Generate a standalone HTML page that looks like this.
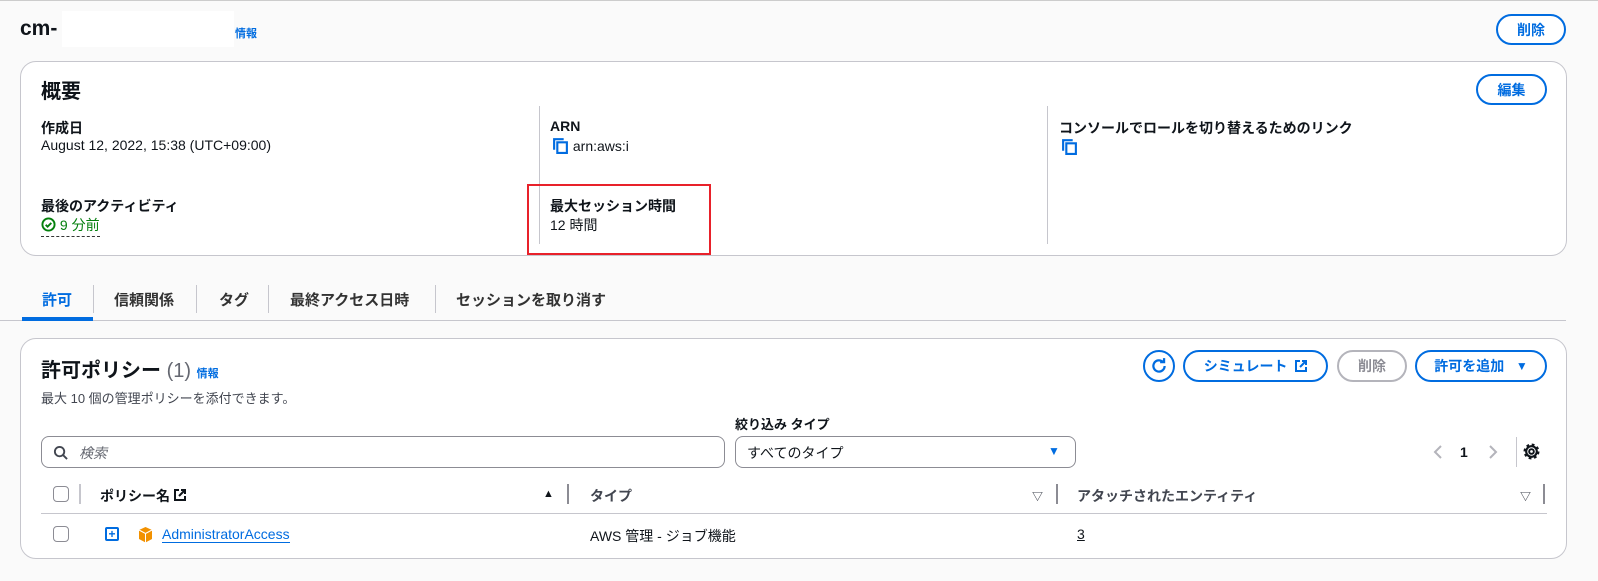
<!DOCTYPE html>
<html><head><meta charset="utf-8"><style>
*{box-sizing:border-box;margin:0;padding:0}
body{width:1598px;height:581px;background:#fafafa;font-family:"Liberation Sans","Noto Sans CJK JP",sans-serif;color:#0f141a;position:relative;overflow:hidden;font-size:14px;border-top:1px solid #ccc}
.a{position:absolute;white-space:nowrap}
.card{position:absolute;background:#fff;border:1px solid #c6c6cd;border-radius:16px}
.btn{position:absolute;border:2px solid #006ce0;border-radius:20px;color:#006ce0;font-weight:bold;font-size:14px;display:flex;align-items:center;justify-content:center;background:#fff}
.lbl{font-weight:bold;font-size:14px}
.blue{color:#006ce0}
.vd{position:absolute;width:1px;background:#c6c6cd}
.cb{position:absolute;width:16px;height:16px;border:1.5px solid #8c8c94;border-radius:4px;background:#fff}
</style></head><body>
<div class="a" style="left:20px;top:16px;font-size:21px;font-weight:bold">cm-</div>
<div class="a" style="left:62px;top:10px;width:172px;height:36px;background:#fff"></div>
<div class="a blue" style="left:235px;top:24px;font-size:11px;font-weight:bold">情報</div>
<div class="btn" style="left:1496px;top:13px;width:70px;height:31px">削除</div>

<div class="card" style="left:20px;top:60px;width:1547px;height:195px"></div>
<div class="a" style="left:41px;top:74px;font-size:20px;font-weight:bold">概要</div>
<div class="btn" style="left:1476px;top:73px;width:71px;height:31px">編集</div>
<div class="vd" style="left:539px;top:105px;height:138px"></div>
<div class="vd" style="left:1047px;top:105px;height:138px"></div>
<div class="a lbl" style="left:41px;top:117px">作成日</div>
<div class="a" style="left:41px;top:136px">August 12, 2022, 15:38 (UTC+09:00)</div>
<div class="a lbl" style="left:41px;top:195px">最後のアクティビティ</div>
<div class="a" style="left:41px;top:214px;color:#037f0c;border-bottom:1px dashed #333;padding-bottom:1px"><svg width="15" height="15" viewBox="0 0 16 16" style="vertical-align:-2px"><circle cx="8" cy="8" r="6.5" fill="none" stroke="#037f0c" stroke-width="2"/><path d="M5 8.3l2 2 4-4" fill="none" stroke="#037f0c" stroke-width="2"/></svg> 9 分前</div>
<div class="a lbl" style="left:550px;top:117px">ARN</div>
<div class="a" style="left:552px;top:136px"><svg width="17" height="17" viewBox="0 0 16 16" style="vertical-align:-3px"><path d="M2 12V2h9" fill="none" stroke="#006ce0" stroke-width="2"/><rect x="5" y="5" width="9" height="10" fill="none" stroke="#006ce0" stroke-width="2"/></svg> arn:aws:i</div>
<div class="a lbl" style="left:550px;top:195px">最大セッション時間</div>
<div class="a" style="left:550px;top:214px">12 時間</div>
<div class="a lbl" style="left:1059px;top:117px">コンソールでロールを切り替えるためのリンク</div>
<div class="a" style="left:1061px;top:137px"><svg width="17" height="17" viewBox="0 0 16 16"><path d="M2 12V2h9" fill="none" stroke="#006ce0" stroke-width="2"/><rect x="5" y="5" width="9" height="10" fill="none" stroke="#006ce0" stroke-width="2"/></svg></div>
<div class="a" style="left:527px;top:183px;width:184px;height:71px;border:2px solid #e8212a"></div>

<div class="a" style="left:0;top:319px;width:1566px;height:1px;background:#c6c6cd"></div>
<div class="a" style="left:22px;top:316px;width:71px;height:4px;background:#006ce0"></div>
<div class="a" style="left:42px;top:288px;font-size:15px;font-weight:bold;color:#006ce0">許可</div>
<div class="a" style="left:114px;top:288px;font-size:15px;font-weight:bold;color:#333">信頼関係</div>
<div class="a" style="left:219px;top:288px;font-size:15px;font-weight:bold;color:#333">タグ</div>
<div class="a" style="left:290px;top:288px;font-size:15px;font-weight:bold;color:#333">最終アクセス日時</div>
<div class="a" style="left:456px;top:288px;font-size:15px;font-weight:bold;color:#333">セッションを取り消す</div>
<div class="vd" style="left:93px;top:284px;height:28px"></div>
<div class="vd" style="left:196px;top:284px;height:28px"></div>
<div class="vd" style="left:268px;top:284px;height:28px"></div>
<div class="vd" style="left:435px;top:284px;height:28px"></div>

<div class="card" style="left:20px;top:337px;width:1547px;height:221px"></div>
<div class="a" style="left:41px;top:353px;font-size:20px;font-weight:bold">許可ポリシー <span style="font-weight:normal;color:#656871">(1)</span> <span class="blue" style="font-size:11px">情報</span></div>
<div class="a" style="left:41px;top:387px;font-size:13px;color:#424650">最大 10 個の管理ポリシーを添付できます。</div>
<div class="btn" style="left:1143px;top:349px;width:32px;height:32px;border-radius:50%"><svg width="18" height="18" viewBox="0 0 16 16"><path d="M13 8a5 5 0 1 1-1.6-3.7" fill="none" stroke="#006ce0" stroke-width="2"/><path d="M9 4.5h3.5V1" fill="none" stroke="#006ce0" stroke-width="2"/></svg></div>
<div class="btn" style="left:1183px;top:349px;width:145px;height:32px">シミュレート&nbsp;&nbsp;<svg width="12" height="12" viewBox="0 0 12 12"><path d="M5 1H1v10h10V7M7 1h4v4M11 1L5 7" fill="none" stroke="#006ce0" stroke-width="2"/></svg></div>
<div class="btn" style="left:1337px;top:349px;width:70px;height:32px;border-color:#b4b4bb;color:#8c8c94">削除</div>
<div class="btn" style="left:1415px;top:349px;width:132px;height:32px">許可を追加&nbsp;&nbsp;&nbsp;<span style="font-size:12px">▼</span></div>
<div class="a lbl" style="left:735px;top:413px;font-size:13px">絞り込み タイプ</div>
<div class="a" style="left:41px;top:435px;width:684px;height:32px;border:1px solid #8c8c94;border-radius:8px;background:#fff"></div>
<svg class="a" style="left:53px;top:444px" width="15" height="15" viewBox="0 0 16 16"><circle cx="7" cy="7" r="5" fill="none" stroke="#424650" stroke-width="2"/><path d="M11 11l4 4" stroke="#424650" stroke-width="2"/></svg>
<div class="a" style="left:79px;top:442px;color:#656871;font-style:italic">検索</div>
<div class="a" style="left:735px;top:435px;width:341px;height:32px;border:1px solid #8c8c94;border-radius:8px;background:#fff"></div>
<div class="a" style="left:747px;top:442px">すべてのタイプ</div>
<div class="a" style="left:1048px;top:443px;color:#006ce0;font-size:12px">▼</div>
<svg class="a" style="left:1433px;top:443px" width="10" height="16" viewBox="0 0 10 16"><path d="M8 2L2 8l6 6" fill="none" stroke="#b4b4bb" stroke-width="2"/></svg>
<div class="a" style="left:1460px;top:443px;font-weight:bold">1</div>
<svg class="a" style="left:1488px;top:443px" width="10" height="16" viewBox="0 0 10 16"><path d="M2 2l6 6-6 6" fill="none" stroke="#b4b4bb" stroke-width="2"/></svg>
<div class="vd" style="left:1516px;top:436px;height:30px"></div>
<svg class="a" style="left:1523px;top:442px" width="17" height="17" viewBox="0 0 16 16"><circle cx="8" cy="8" r="2.2" fill="none" stroke="#0f141a" stroke-width="1.8"/><circle cx="8" cy="8" r="5" fill="none" stroke="#0f141a" stroke-width="2"/><circle cx="8" cy="8" r="6.3" fill="none" stroke="#0f141a" stroke-width="2.4" stroke-dasharray="2.5 2.45"/></svg>

<div class="cb" style="left:53px;top:485px"></div>
<div class="vd" style="left:79px;top:483px;height:20px;width:2px"></div>
<div class="a lbl" style="left:100px;top:485px">ポリシー名 <svg width="12" height="12" viewBox="0 0 12 12"><path d="M5 1H1v10h10V7M7 1h4v4M11 1L5 7" fill="none" stroke="#0f141a" stroke-width="2"/></svg></div>
<div class="a" style="left:543px;top:487px;font-size:11px">▲</div>
<div class="vd" style="left:567px;top:483px;height:20px;width:2px;background:#8c8c94"></div>
<div class="a lbl" style="left:590px;top:485px;color:#424650">タイプ</div>
<div class="a" style="left:1032px;top:487px;font-size:11px;color:#424650;font-weight:bold">▽</div>
<div class="vd" style="left:1056px;top:483px;height:20px;width:2px;background:#8c8c94"></div>
<div class="a lbl" style="left:1077px;top:485px;color:#424650">アタッチされたエンティティ</div>
<div class="a" style="left:1520px;top:487px;font-size:11px;color:#424650;font-weight:bold">▽</div>
<div class="vd" style="left:1543px;top:483px;height:20px;width:2px;background:#8c8c94"></div>
<div class="a" style="left:41px;top:512px;width:1506px;height:1px;background:#c6c6cd"></div>
<div class="cb" style="left:53px;top:525px"></div>
<div class="a" style="left:105px;top:526px;width:14px;height:14px;border:2px solid #006ce0;border-radius:2px;color:#006ce0;font-size:12px;font-weight:bold;line-height:10px;text-align:center">+</div>
<svg class="a" style="left:138px;top:525px" width="15" height="17" viewBox="0 0 15 17"><path d="M7.5 1L14 4v9l-6.5 3.5L1 13V4z" fill="#f29100"/><path d="M1 4l6.5 3.5L14 4M7.5 7.5v9" stroke="#fff" stroke-width="1" fill="none"/></svg>
<div class="a blue" style="left:162px;top:525px;border-bottom:1px solid #006ce0">AdministratorAccess</div>
<div class="a" style="left:590px;top:525px">AWS 管理 - ジョブ機能</div>
<div class="a" style="left:1077px;top:525px;text-decoration:underline">3</div>
</body></html>
